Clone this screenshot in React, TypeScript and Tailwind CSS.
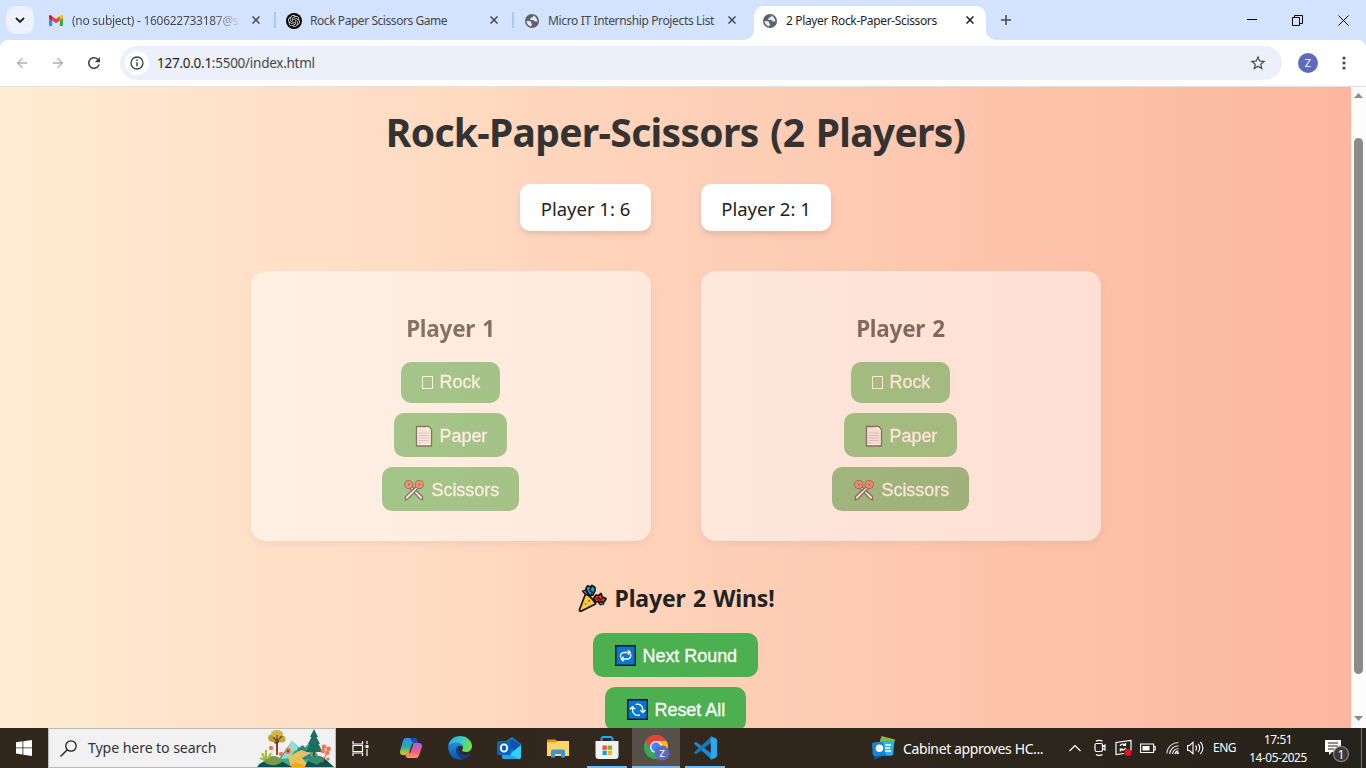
import type { ReactNode } from "react";
import { MdRefresh, MdStarBorder, MdArrowBack, MdArrowForward } from "react-icons/md";
import { SiOpenai } from "react-icons/si";

const GmailIcon = () => (
  <svg width="14" height="11" viewBox="0 0 14 11">
    <path d="M0 2v8a1 1 0 0 0 1 1h2.200V4.500z" fill="#4285f4" />
    <path d="M14 2v8a1 1 0 0 1-1 1h-2.200V4.500z" fill="#34a853" />
    <path d="M10.800 1.200 12 .3c.9-.7 2 0 2 1.100V3l-3.200 2.400z" fill="#fbbc04" />
    <path d="M3.200 1.200 7 4l3.800-2.800v4.200L7 8.200 3.200 5.400z" fill="#ea4335" />
    <path d="M0 3V1.400C0 .3 1.100-.4 2 .3l1.200.9v4.200z" fill="#c5221f" />
  </svg>
);

const OpenAiIcon = () => (
  <span className="flex size-4 items-center justify-center rounded-full bg-black">
    <SiOpenai size={12} color="#e8e8e8" />
  </span>
);

const GlobeIcon = () => (
  <svg className="ml-px" width="14" height="14" viewBox="0 0 14 14">
    <circle cx="7" cy="7" r="7" fill="#5f6368" />
    <path
      d="M8.500 1.600c0 1-.6 1.500-1.500 1.600-.9.100-.6 1.100-1.500 1.400-.8.300-.6 1.500.4 1.500h1.900c1.200 0 1.500 1.500 2.600 1.500h2C12.200 5 10.800 2.600 8.500 1.600z"
      fill="#dfe9fc"
    />
    <path d="M1.600 6.900h2.200c1.800 0 2.500.9 2.400 2 0 .8 1.100.6.9 1.600-.2.900-1.100.9-1 1.900C3.500 11.800 1.500 9.600 1.600 6.900z" fill="#dfe9fc" />
  </svg>
);

const CloseIcon = ({ color }: { color: string }) => (
  <svg width="8" height="8" viewBox="0 0 8 8" stroke={color} strokeWidth="1.500">
    <path d="M.5.5l7 7M7.500.5l-7 7" />
  </svg>
);

type TabProps = { icon: ReactNode; iconPad: string; title: ReactNode; active?: boolean; divider?: boolean };

const Tab = ({ icon, iconPad, title, active, divider }: TabProps) => (
  <div className={"relative flex h-[34px] w-[238px] shrink-0 items-center pb-[5px] " + iconPad}>
    {active && (
      <>
        <div className="absolute inset-y-0 left-0 w-[232px] rounded-t-[10px] bg-white" />
        <svg className="absolute bottom-0 -left-[10px]" width="10" height="10">
          <path d="M10 0v10H0A10 10 0 0 0 10 0z" fill="#fff" />
        </svg>
        <svg className="absolute bottom-0 left-[232px]" width="10" height="10">
          <path d="M0 0v10h10A10 10 0 0 1 0 0z" fill="#fff" />
        </svg>
      </>
    )}
    <span className="relative flex w-[23px] shrink-0 items-center">{icon}</span>
    <span
      className={
        "relative text-[12px] leading-5 whitespace-nowrap " + (active ? "text-[#1f1f1f]" : "text-[#474747]")
      }
    >
      {title}
    </span>
    <span className="absolute top-[10px] left-[212px]">
      <CloseIcon color={active ? "#1f1f1f" : "#45474a"} />
    </span>
    {divider && <span className="absolute top-1.5 left-[234px] h-4 w-[2px] bg-[#a8c7fa]" />}
  </div>
);

const PaperEmoji = () => (
  <svg className="-mr-[2px] -ml-[2px]" width="24" height="24" viewBox="0 0 24 24">
    <path d="M4.500 2.500h12l3 3v16.500h-15z" fill="#fff" stroke="#111" strokeWidth="1.300" />
    <path d="M6 4h9v3h3v13H6z" fill="#ececec" />
    <path d="M14 3h2l3 3h-5z" fill="#fff" />
    <path d="M6.500 9h10M6.500 11.500h10M6.500 14h10M6.500 16.500h10M6.500 19h3" stroke="#b9b9b9" strokeWidth="1" />
  </svg>
);

const ScissorsEmoji = () => (
  <svg width="24" height="24" viewBox="0 0 24 24">
    <path d="M9.500 8.500 20.500 18.500v3.500l-3-1.500L7.500 10z" fill="#f2f2f2" stroke="#111" strokeWidth="1.300" />
    <path d="M14.500 8.500 3.500 18.500v3.500L6.500 20.500 16.500 10z" fill="#f2f2f2" stroke="#111" strokeWidth="1.300" />
    <g fill="none" stroke="#111" strokeWidth="4.600">
      <circle cx="6.800" cy="6.500" r="2.300" /><circle cx="17.200" cy="6.500" r="2.300" />
    </g>
    <g fill="none" stroke="#ff3c14" strokeWidth="2.800">
      <circle cx="6.800" cy="6.500" r="2.300" /><circle cx="17.200" cy="6.500" r="2.300" />
    </g>
  </svg>
);

const PartyEmoji = () => (
  <svg width="29" height="29" viewBox="0 0 29 29" strokeLinejoin="round">
    <path d="M9.500 1.800 8 4.500l1 3.500 3 4 3-1 2-4V3.500L14 1.300l-1.500 1.500z" fill="#16a3c4" stroke="#111" strokeWidth="1.600" />
    <path d="M13.500 3l-2 3.500 3 1.500-2 3.500" fill="none" stroke="#111" strokeWidth="1.300" />
    <path d="M4.500 7.200 7.500 6l3 4-2.500.8z" fill="#886ce4" stroke="#111" strokeWidth="1.300" />
    <path d="M15.500 14.500 18 11l2.500.5L23 9.500l1.500 3.500 3.500 1.500-1.500 3-3.500.8-2.500-1-2.500 1z" fill="#f03a17" stroke="#111" strokeWidth="1.700" />
    <path d="M18.500 15.500l2-2 2 2.500 2-2" fill="none" stroke="#111" strokeWidth="1.100" />
    <path d="M20.500 18.500l4.500-1 .8 2.300-3.500 1z" fill="#886ce4" stroke="#111" strokeWidth="1.300" />
    <path d="M1.500 25.500 7.500 10c4 1.500 8.500 6 10 10L3.500 27c-1.500.6-2.500-.2-2-1.500z" fill="#ffc83d" stroke="#111" strokeWidth="1.700" />
    <circle cx="11" cy="17" r="1" fill="#f03a17" />
    <circle cx="7.500" cy="20" r=".9" fill="#16a3c4" />
    <circle cx="12" cy="21" r=".9" fill="#8b8" />
  </svg>
);

const RepeatEmoji = () => (
  <svg className="mt-px ml-px -mr-px" width="24" height="24" viewBox="0 0 24 24">
    <rect x="1.800" y="1.800" width="19.500" height="19.500" fill="#0078d7" stroke="#111" strokeWidth="1.400" />
    <g fill="none" stroke="#fff" strokeWidth="1.300">
      <path d="M6.500 13.500v-1.500a3.500 3.500 0 0 1 3.500-3.500h6M14 6.200l2.300 2.300L14 10.800M16.800 10v1.500A3.500 3.500 0 0 1 13.300 15H7.500M9.500 12.700 7.200 15l2.300 2.300" />
    </g>
  </svg>
);

const CycleEmoji = () => (
  <svg className="mt-px ml-px -mr-px" width="24" height="24" viewBox="0 0 24 24">
    <rect x="1.800" y="1.800" width="19.500" height="19.500" fill="#0078d7" stroke="#111" strokeWidth="1.400" />
    <g fill="none" stroke="#fff" strokeWidth="1.300">
      <path d="M9.500 6.500A5.300 5.300 0 0 1 16.800 11v3M14.200 12l2.600 2.600 2.600-2.600" />
      <path d="M14 16.800A5.300 5.300 0 0 1 6.500 12V9M3.900 11.300l2.600-2.600 2.600 2.600" />
    </g>
  </svg>
);

const GameButton = ({ size, icon, label, hover }: { size: string; icon: ReactNode; label: string; hover?: boolean }) => (
  <button
    className={
      "flex items-center rounded-[10px] pl-5 font-['Liberation_Sans',sans-serif] text-[18px] whitespace-nowrap text-white " +
      size +
      (hover ? " bg-[#45a049]" : " bg-[#4caf50]")
    }
  >
    {icon}
    <span className="mt-px ml-[5.500px] tracking-[-0.050px] [-webkit-text-stroke:0.300px]">{label}</span>
  </button>
);

const PlayerPanel = ({ name, scissorsHover }: { name: string; scissorsHover?: boolean }) => (
  <section className="flex h-[270px] w-[400px] flex-col items-center rounded-[15px] bg-white pt-[42px] opacity-50 shadow-[0_4px_10px_rgba(0,0,0,0.100)]">
    <h2 className="mb-[17px] h-8 text-[22.500px] leading-8 font-bold tracking-[-0.250px] [word-spacing:1.500px] text-[#0c0c0c]">{name}</h2>
    <div className="flex flex-col items-center gap-[10px]">
      <GameButton
        size="h-[41px] w-[99px] pb-px"
        icon={<span className="mx-px mt-px h-[13px] w-[11px] border border-white" />}
        label="Rock"
      />
      <GameButton size="h-[44px] w-[113px] pt-px" icon={<PaperEmoji />} label="Paper" />
      <GameButton size="h-[44px] w-[137px] pt-px" icon={<ScissorsEmoji />} label="Scissors" hover={scissorsHover} />
    </div>
  </section>
);

const Score = ({ text, size }: { text: string; size: string }) => (
  <div
    className={
      "flex h-[47px] items-center justify-center rounded-[10px] bg-white pt-[2px] text-[18.500px] whitespace-nowrap text-[#222] shadow-[0_4px_6px_rgba(0,0,0,0.100)] " +
      size
    }
  >
    {text}
  </div>
);

const Chrome = () => (
  <header className="shrink-0">
    <div className="flex h-10 bg-[#d3e3fd]">
      <div className="flex w-[34px] shrink-0 pt-1.5 pl-1.5">
        <div className="flex size-7 items-center justify-center rounded-[10px] bg-[#ecf2fe]">
          <svg width="10" height="7" viewBox="0 0 10 7" fill="none" stroke="#1f1f1f" strokeWidth="1.800">
            <path d="M1 1l4 4 4-4" />
          </svg>
        </div>
      </div>
      <div className="flex pt-1.5 pl-1.5">
        <Tab
          icon={<GmailIcon />}
          iconPad="pl-[9px]"
          divider
          title={
            <span className="bg-linear-to-r from-[#474747] from-85% to-[#47474720] to-100% bg-clip-text tracking-[-0.280px] text-transparent">
              (no subject) - 160622733187@s
            </span>
          }
        />
        <Tab icon={<OpenAiIcon />} iconPad="pl-[8px]" divider title={<span className="ml-px tracking-[-0.440px]">Rock Paper Scissors Game</span>} />
        <Tab icon={<GlobeIcon />} iconPad="pl-[8px]" title={<span className="ml-px tracking-[-0.360px]">Micro IT Internship Projects List</span>} />
        <Tab icon={<GlobeIcon />} iconPad="pl-[8px]" active title={<span className="ml-px tracking-[-0.350px]">2 Player Rock-Paper-Scissors</span>} />
      </div>
      <svg className="mt-[15px] ml-[9px]" width="10" height="10" stroke="#474747" strokeWidth="1.500">
        <path d="M5 0v10M0 5h10" />
      </svg>
      <div className="mr-[17px] ml-auto flex items-center gap-[35px]">
        <svg width="10" height="10" stroke="#000"><path d="M0 4.500h10" /></svg>
        <svg width="11" height="11" viewBox="0 0 11 11" fill="none" stroke="#000"><path d="M.5 2.500h7v8h-7zM2.500 2.500v-2h8v8h-3" /></svg>
        <svg width="11" height="11" viewBox="0 0 11 11" stroke="#000"><path d="M.5.5l10 10M10.500.5l-10 10" /></svg>
      </div>
    </div>
    <div className="bg-[#d3e3fd]">
      <div className="flex h-[47px] items-center rounded-t-[8px] border-b border-[#dfe1e5] bg-white">
        <MdArrowBack className="ml-[14px]" size={16} color="#aeb0b3" />
        <MdArrowForward className="ml-[20px]" size={16} color="#aeb0b3" />
        <MdRefresh className="ml-[19px]" size={18} color="#3c4043" />
        <div className="ml-[17px] flex h-[34px] w-[1162px] items-center rounded-full bg-[#ebf0fa] pl-[5px]">
          <span className="flex size-6 items-center justify-center rounded-full bg-white">
            <svg width="14" height="14" viewBox="0 0 14 14" fill="none" stroke="#3c4043" strokeWidth="1.300">
              <circle cx="7" cy="7" r="6" />
              <path d="M7 6.200v4M7 3.600v1.400" strokeWidth="1.500" />
            </svg>
          </span>
          <span className="ml-2 text-[13.500px] tracking-[-0.260px] text-[#474747]">
            <span className="text-[#1f1f1f]">127.0.0.1</span>:5500/index.html
          </span>
          <MdStarBorder className="mr-[15px] ml-auto" size={18} color="#474747" />
        </div>
        <span className="ml-[16px] flex size-5 items-center justify-center rounded-full bg-[#5c6bc0] text-[11px] text-white">Z</span>
        <svg className="ml-[24px]" width="4" height="14" viewBox="0 0 4 14" fill="#474747">
          <circle cx="2" cy="2" r="1.600" /><circle cx="2" cy="7" r="1.600" /><circle cx="2" cy="12" r="1.600" />
        </svg>
      </div>
    </div>
  </header>
);

const Landscape = () => (
  <svg width="78" height="38" viewBox="0 0 78 38">
    <path d="M16 38 35 12l10 9 8-8 15 25z" fill="#3fa796" />
    <path d="M24 30 35 12l8 8-6 2-4 7z" fill="#8fe0cf" />
    <path d="M40 20l6-4 9 13-11 2z" fill="#2c8578" />
    <path d="M31 28l13-7 10 3-9 5 8 9H34z" fill="#e8c15a" />
    <path d="M32 38l6-5 14 5z" fill="#f5a80f" />
    <path d="M0 38c3-5 7-5 10-7 6-3 13-1 16 2l9 5zM48 38c2-7 8-11 13-11 6 0 10 6 16 11z" fill="#0d5250" />
    <path d="M6 32c5-6 15-7 20 0-5 5-13 6-20 0z" fill="#7b9a50" />
    <path d="M51 32c3-6 12-7 16-1l-7 5z" fill="#328f6c" />
    <path d="M5 24l3 6M3 29l5 2M9 21v9M14 24l-3 6" stroke="#a4bd3c" strokeWidth="2.200" />
    <path d="M20 26V8M20 15l-5-5M20 14l6-6" stroke="#7c3f20" strokeWidth="1.800" />
    <ellipse cx="16" cy="9" rx="5" ry="4" fill="#b3a337" />
    <ellipse cx="20" cy="5" rx="6" ry="4" fill="#d4b646" />
    <ellipse cx="25" cy="10" rx="3.500" ry="3.500" fill="#b5ab3b" />
    <path d="M20 22V6M20 12l-4-4M20 12l5-5" stroke="#7c3f20" strokeWidth="1.200" />
    <path d="M57 28V12" stroke="#73402a" strokeWidth="2" />
    <path d="M57 0l4 8h-1.500l3.500 7h-1.500l4 8H48.500l4-8H51l3.500-7H53z" fill="#1d6f5d" />
    <g fill="#ee7659">
      <circle cx="14" cy="19" r="2.200" /><circle cx="31" cy="22" r="3" /><circle cx="24" cy="25" r="2.200" />
      <circle cx="67" cy="18" r="2.400" /><circle cx="71.500" cy="20" r="2.400" /><circle cx="66" cy="22" r="2.300" /><circle cx="70" cy="24" r="2.300" /><circle cx="71" cy="30" r="1.800" />
    </g>
    <circle cx="68.500" cy="21" r="1.400" fill="#f8bd8e" />
    <circle cx="31" cy="22" r="1.200" fill="#a9321f" />
    <circle cx="48" cy="25" r="2" fill="#f6a99b" />
    <path d="M69 26l-4 8" stroke="#b05d3f" />
  </svg>
);

const CopilotIcon = () => (
  <svg width="24" height="24" viewBox="0 0 24 24">
    <defs>
      <linearGradient id="cpA" x1="0" y1="0" x2="0" y2="1"><stop stopColor="#2196f3" /><stop offset=".5" stopColor="#25a9a8" /><stop offset="1" stopColor="#e9c81c" /></linearGradient>
      <linearGradient id="cpB" x1="0" y1="0" x2="0" y2="1"><stop stopColor="#a661ec" /><stop offset=".55" stopColor="#ef5a8c" /><stop offset="1" stopColor="#ff9d50" /></linearGradient>
    </defs>
    <path d="M7 2h8c2 0 2.700 1 3.200 3l.6 2h-3c-2 0-3 1-3.700 3.200L10 17c-.5 1.500-1 2-2.500 2H4c-2.500 0-3.500-2-2.800-4.500l2.600-9C4.500 3 5.500 2 7 2z" fill="url(#cpA)" />
    <path d="M11 2h4c2 0 2.700 1 3.200 3l.6 2h-4c-2 0-2.800-4-3.800-5z" fill="#174ebc" />
    <path d="M17 22H9.500c-2 0-2.700-1-3.200-3L6 17.500h2.500c2 0 3-1 3.700-3.200L14 9c.5-1.700 1-2 2.500-2H20c2.500 0 3.500 2 2.800 4.500l-2.600 7.500C19.500 21 18.500 22 17 22z" fill="url(#cpB)" />
  </svg>
);

const EdgeIcon = () => (
  <svg width="24" height="24" viewBox="0 0 24 24">
    <defs>
      <linearGradient id="edA" x1="0" y1="0" x2="1" y2=".4"><stop stopColor="#2aa5e8" /><stop offset=".5" stopColor="#36c9c6" /><stop offset="1" stopColor="#6de04c" /></linearGradient>
      <linearGradient id="edB" x1="0" y1="0" x2="0" y2="1"><stop stopColor="#1b8fe0" /><stop offset="1" stopColor="#0b55a8" /></linearGradient>
    </defs>
    <path d="M.3 10C1.200 4 6 0 12 0c7 0 12 5 12 10 0 4-3 6-6 6-2.500 0-4-.8-4-1.700 0-.7 1-1 1-2.800C15 9 12 7 8.500 7 5 7 2 8 .3 10z" fill="url(#edA)" />
    <path d="M.2 11C1 8 4.500 6.500 8.500 6.500c4 0 6.500 2.500 6.500 5-.5-1-1.700-1.800-3-1.800-3 0-4.500 3-3.500 6.500 1 3.500 4 6 7.500 6.500C9 26 0 20.500.2 11z" fill="url(#edB)" />
    <path d="M8.500 12.500c-1.500 5 2.500 9.500 6.500 10.200 3 .4 6-2 7.500-4.500.3-.6-.3-.8-.8-.5-5 2.500-10 .3-10.500-4.200-.1-1.700.6-3 1.300-3.500-2 0-3.500.8-4 2.500z" fill="#123e80" />
  </svg>
);

const OutlookIcon = () => (
  <svg width="25" height="24" viewBox="0 0 25 24">
    <path d="M5 8 15 1l9 7v13a2 2 0 0 1-2 2H7a2 2 0 0 1-2-2z" fill="#1180d4" />
    <path d="M5 9l10-6 9 6-6 5-7-2z" fill="#174fab" />
    <path d="M24 9v12a2 2 0 0 1-2 2H7z" fill="#2fd0f3" />
    <path d="M5 15l17 8H7a2 2 0 0 1-2-2z" fill="#24a6eb" />
    <rect x="0" y="5" width="14" height="14" rx="1.500" fill="#0b62c4" />
    <ellipse cx="7" cy="12" rx="3.200" ry="3.600" fill="none" stroke="#fff" strokeWidth="1.900" />
  </svg>
);

const ExplorerIcon = () => (
  <svg width="22" height="19" viewBox="0 0 22 19">
    <path d="M0 1.500A1 1 0 0 1 1 .5h7.500l2 2H22V8H0z" fill="#dc9b18" />
    <path d="M0 3.500h9l1.500-1.500H22V17H0z" fill="#ffd566" />
    <path d="M4 18.500V12a1.500 1.500 0 0 1 1.500-1.500h11A1.500 1.500 0 0 1 18 12v6.500h-4V15H8v3.500z" fill="#3d94da" />
  </svg>
);

const StoreIcon = () => (
  <svg width="24" height="24" viewBox="0 0 24 24">
    <path d="M6.500 6V2.800A1.800 1.800 0 0 1 8.300 1h7.400a1.800 1.800 0 0 1 1.800 1.800V6" fill="none" stroke="#27a5e8" strokeWidth="1.800" />
    <path d="M.5 5h23v15a3 3 0 0 1-3 3h-17a3 3 0 0 1-3-3z" fill="#f2f2f2" />
    <path d="M7.500 9.500h4.300v4.300H7.500z" fill="#f25022" /><path d="M12.700 9.500H17v4.300h-4.300z" fill="#7fba00" />
    <path d="M7.500 14.700h4.300V19H7.500z" fill="#00a4ef" /><path d="M12.700 14.700H17V19h-4.300z" fill="#ffb900" />
  </svg>
);

const ChromeIcon = () => (
  <svg className="ml-[2px]" width="26" height="26" viewBox="0 0 26 26">
    <circle cx="12" cy="12" r="12" fill="#34a853" />
    <path d="M12 12 1.600 6A12 12 0 0 1 22.400 6z" fill="#ea4335" />
    <path d="M12 6h10.400A12 12 0 0 1 12 24l5.200-9z" fill="#fbbc04" />
    <path d="M1.600 6 6.800 15 12 12V6z" fill="#ea4335" />
    <path d="M1.600 6a12 12 0 0 0 10.400 18l4-7-9-2z" fill="#34a853" />
    <circle cx="12" cy="12" r="6" fill="#fff" />
    <circle cx="12" cy="12" r="4.700" fill="#4285f4" />
    <circle cx="18" cy="18" r="7.500" fill="#5c6bc0" />
    <text x="18" y="21.500" textAnchor="middle" fontSize="9.500" fill="#fff" fontFamily="Roboto">Z</text>
  </svg>
);

const CodeIcon = () => (
  <svg className="-ml-px" width="24" height="24" viewBox="0 0 24 24">
    <path d="M.8 7.500 3 5.800 18.500 17.500v6z" fill="#1c8ad4" />
    <path d="M.8 16.500 3 18.200 18.500 6.500v-6z" fill="#1478c2" />
    <path d="M17.800.2 23 2.600a1.500 1.500 0 0 1 1 1.400v16a1.500 1.500 0 0 1-1 1.400l-5.200 2.400z" fill="#2ba7ef" />
  </svg>
);

const NewsIcon = () => (
  <svg width="24" height="24" viewBox="0 0 24 24">
    <path d="M9.500 0 23 3.500l-2 9L7 8z" fill="#86bb43" />
    <path d="M1 12l15 6-13.500 5.500z" fill="#0c5d9e" />
    <path d="M1.500 6.500 20.500 5a1.500 1.500 0 0 1 1.500 1.500L21 18a2 2 0 0 1-2 1.500L2.500 20A2 2 0 0 1 .7 18L0 8.200a1.700 1.700 0 0 1 1.500-1.700z" fill="#1683d6" />
    <path d="M11 5.800 20.500 5A1.500 1.500 0 0 1 22 6.500L21 18a2 2 0 0 1-2 1.500l-5 .1z" fill="#29b4ea" />
    <circle cx="7.500" cy="12.300" r="3.800" fill="#fff" />
    <path d="M13 9h6M13 12h5M13 15h6" stroke="#fff" strokeWidth="1.300" />
  </svg>
);

const TaskButton = ({ children, running, active }: { children: ReactNode; running?: boolean; active?: boolean }) => (
  <div className={"relative flex h-10 w-12 items-center justify-center " + (active ? "bg-[#575049]" : "")}>
    {children}
    {running && <span className={"absolute bottom-0 h-0.5 bg-[#76b9ed] " + (active ? "inset-x-0" : "inset-x-1")} />}
  </div>
);

const Taskbar = () => (
  <footer className="flex h-10 shrink-0 items-center bg-linear-to-r from-[#30271d] via-[#33281d] to-[#25231b] text-white">
    <div className="flex w-12 justify-center">
      <svg width="16" height="16" viewBox="0 0 16 16" fill="#fff">
        <path d="M0 2.200 6.500 1.300v6.200H0zM7.300 1.200 16 0v7.500H7.300zM0 8.300h6.500v6.200L0 13.600zM7.300 8.300H16V16l-8.700-1.200z" />
      </svg>
    </div>
    <div className="flex h-10 w-[288px] items-center overflow-hidden border border-[#bcbcbc] bg-[#f1f1f1] pl-[11px]">
      <svg width="17" height="17" viewBox="0 0 17 17" fill="none" stroke="#1d1d1d" strokeWidth="1.300">
        <circle cx="11" cy="6" r="5.200" /><path d="M7.300 9.700.5 16.500" />
      </svg>
      <span className="ml-[11px] text-[14.200px] tracking-[-0.120px] whitespace-nowrap text-[#333]">Type here to search</span>
      <span className="mr-0 ml-auto"><Landscape /></span>
    </div>
    <div className="mr-[3px]">
      <TaskButton>
        <svg width="17" height="17" viewBox="0 0 17 17" fill="none" stroke="#fff" strokeWidth="1.200">
          <path d="M1 1v3h9.500V1M1 16v-3h9.500v3M1 5.500h9.500v6H1zM15 1v3M15 9v7" /><path d="M13.500 5h3v3h-3z" fill="#fff" stroke="none" />
        </svg>
      </TaskButton>
    </div>
    <div className="flex gap-px">
      <TaskButton><CopilotIcon /></TaskButton>
      <TaskButton><EdgeIcon /></TaskButton>
      <TaskButton><OutlookIcon /></TaskButton>
      <TaskButton><ExplorerIcon /></TaskButton>
      <TaskButton running><StoreIcon /></TaskButton>
      <TaskButton running active><ChromeIcon /></TaskButton>
      <TaskButton running><CodeIcon /></TaskButton>
    </div>
    <div className="ml-auto flex h-10 items-center">
      <NewsIcon />
      <span className="ml-[7px] w-[166px] text-[14px] tracking-[-0.390px] whitespace-nowrap">Cabinet approves HC...</span>
      <svg className="w-[25px]" width="25" height="16" viewBox="0 0 25 16" fill="none" stroke="#fff" strokeWidth="1.200"><path d="M.5 11 6 5.500l5.500 5.500" /></svg>
      <svg width="21" height="18" viewBox="0 0 21 18" fill="none" stroke="#fff" strokeWidth="1.200">
        <rect x="1" y="4.500" width="7.500" height="8" rx="1.500" /><path d="M8.500 7.500 11 6v5L8.500 9.500M2 2.200C3.500 1 7 1 8.500 2.200M2 15.500c1.500 1.200 5 1.200 6.500 0" />
      </svg>
      <svg width="25" height="18" viewBox="0 0 25 18" fill="none" stroke="#fff" strokeWidth="1.200">
        <path d="M9 14.500 1 15.500V3.500L16 1.500v10M5 7a3 3 0 0 1 5-1M10.500 4v2.500H8M10.500 9a3 3 0 0 1-5 1.200M5.300 12.500V10H8" /><circle cx="13" cy="13.500" r="3.500" fill="#e81123" stroke="none" />
      </svg>
      <svg width="26" height="16" viewBox="0 0 26 16" fill="none" stroke="#fff" strokeWidth="1.100"><path d="M.6 4h13v8.500H.6zM14 6.500h1.200V10H14" /><path d="M2.500 6h7v4.500h-7z" fill="#fff" stroke="none" /></svg>
      <svg width="21" height="18" viewBox="0 0 21 18" fill="none" stroke="#fff" strokeWidth="1.100">
        <path d="M.7 14.500A12 12 0 0 1 12.500 3.500" opacity=".75" /><path d="M3.700 15A9 9 0 0 1 12.500 6.700M6.500 15a6 6 0 0 1 6-5.300M9 15a3.500 3.500 0 0 1 3.500-3" /><circle cx="11.600" cy="14" r="1.200" fill="#fff" stroke="none" />
      </svg>
      <svg width="26" height="16" viewBox="0 0 26 16" fill="none" stroke="#fff" strokeWidth="1.100">
        <path d="M.6 5.500h2L6 2.200v11.600L2.600 10.500h-2zM8.500 5.500a3.500 3.500 0 0 1 0 5M11 3.800a6 6 0 0 1 0 8.400M13.400 2a8.500 8.500 0 0 1 0 12" />
      </svg>
      <span className="w-[35px] text-[12px] tracking-[-0.500px]">ENG</span>
      <div className="w-[60px] pb-px text-center text-[11.800px] leading-[18px] tracking-[-0.400px] whitespace-nowrap">
        <div>17:51</div>
        <div>14-05-2025</div>
      </div>
      <div className="ml-[17px] flex h-10 w-[36px] items-center">
        <svg className="mt-0.5" width="26" height="26" viewBox="0 0 26 26">
          <path d="M0 4h16v12H7l-3 3v-3H0z" fill="#fff" /><path d="M3 7h10M3 10h10M3 13h6" stroke="#28231b" strokeWidth="1.200" />
          <circle cx="16" cy="18" r="7.500" fill="#3b3a38" stroke="#8b8b8b" strokeWidth="1.200" />
          <text x="16" y="22.500" textAnchor="middle" fontSize="12.500" fill="#fff" fontFamily="Noto Sans">1</text>
        </svg>
      </div>
      <div className="mr-1 h-10 w-px bg-[#77746e]" />
    </div>
  </footer>
);

export default function App() {
  return (
    <div className="flex h-[768px] w-[1366px] flex-col overflow-hidden bg-white font-['Noto_Sans',sans-serif]">
      <Chrome />
      <div className="flex h-[641px] shrink-0">
        <main className="flex w-[1351px] flex-col items-center overflow-hidden bg-linear-to-r from-[#ffecd2] to-[#fcb69f]">
          <h1 className="mt-[18px] h-[53px] shrink-0 text-[39px] leading-[53px] font-bold tracking-[-0.690px] whitespace-nowrap [word-spacing:2px] text-[#333]">
            Rock-Paper-Scissors (2 Players)
          </h1>
          <div className="mt-[26px] flex shrink-0 gap-[50px]">
            <Score text="Player 1: 6" size="w-[131px]" />
            <Score text="Player 2: 1" size="w-[130px]" />
          </div>
          <div className="mt-10 flex shrink-0 gap-[50px]">
            <PlayerPanel name="Player 1" />
            <PlayerPanel name="Player 2" scissorsHover />
          </div>
          <div className="mt-[41px] ml-px flex h-8 shrink-0 items-center text-[23px] font-bold tracking-[-0.170px] whitespace-nowrap [word-spacing:1.500px] text-[#222]">
            <PartyEmoji />
            <span className="ml-[8px]">Player 2 Wins!</span>
          </div>
          <div className="mt-[19px] flex shrink-0 flex-col items-center gap-[10px]">
            <GameButton size="h-[44px] w-[165px] pt-px" icon={<RepeatEmoji />} label="Next Round" />
            <GameButton size="h-[44px] w-[141px] pt-px" icon={<CycleEmoji />} label="Reset All" />
          </div>
        </main>
        <div className="flex w-[15px] flex-col items-center justify-between bg-[#fcfcfc] pt-[6px] pb-[7px]">
          <svg width="9" height="5" fill="#8b8b8b"><path d="M4.500 0 9 5H0z" /></svg>
          <div className="mt-10 mb-auto h-[536px] w-[9px] shrink-0 rounded-full bg-[#8b8b8b]" />
          <svg width="9" height="5" fill="#8b8b8b"><path d="M0 0h9L4.500 5z" /></svg>
        </div>
      </div>
      <Taskbar />
    </div>
  );
}
